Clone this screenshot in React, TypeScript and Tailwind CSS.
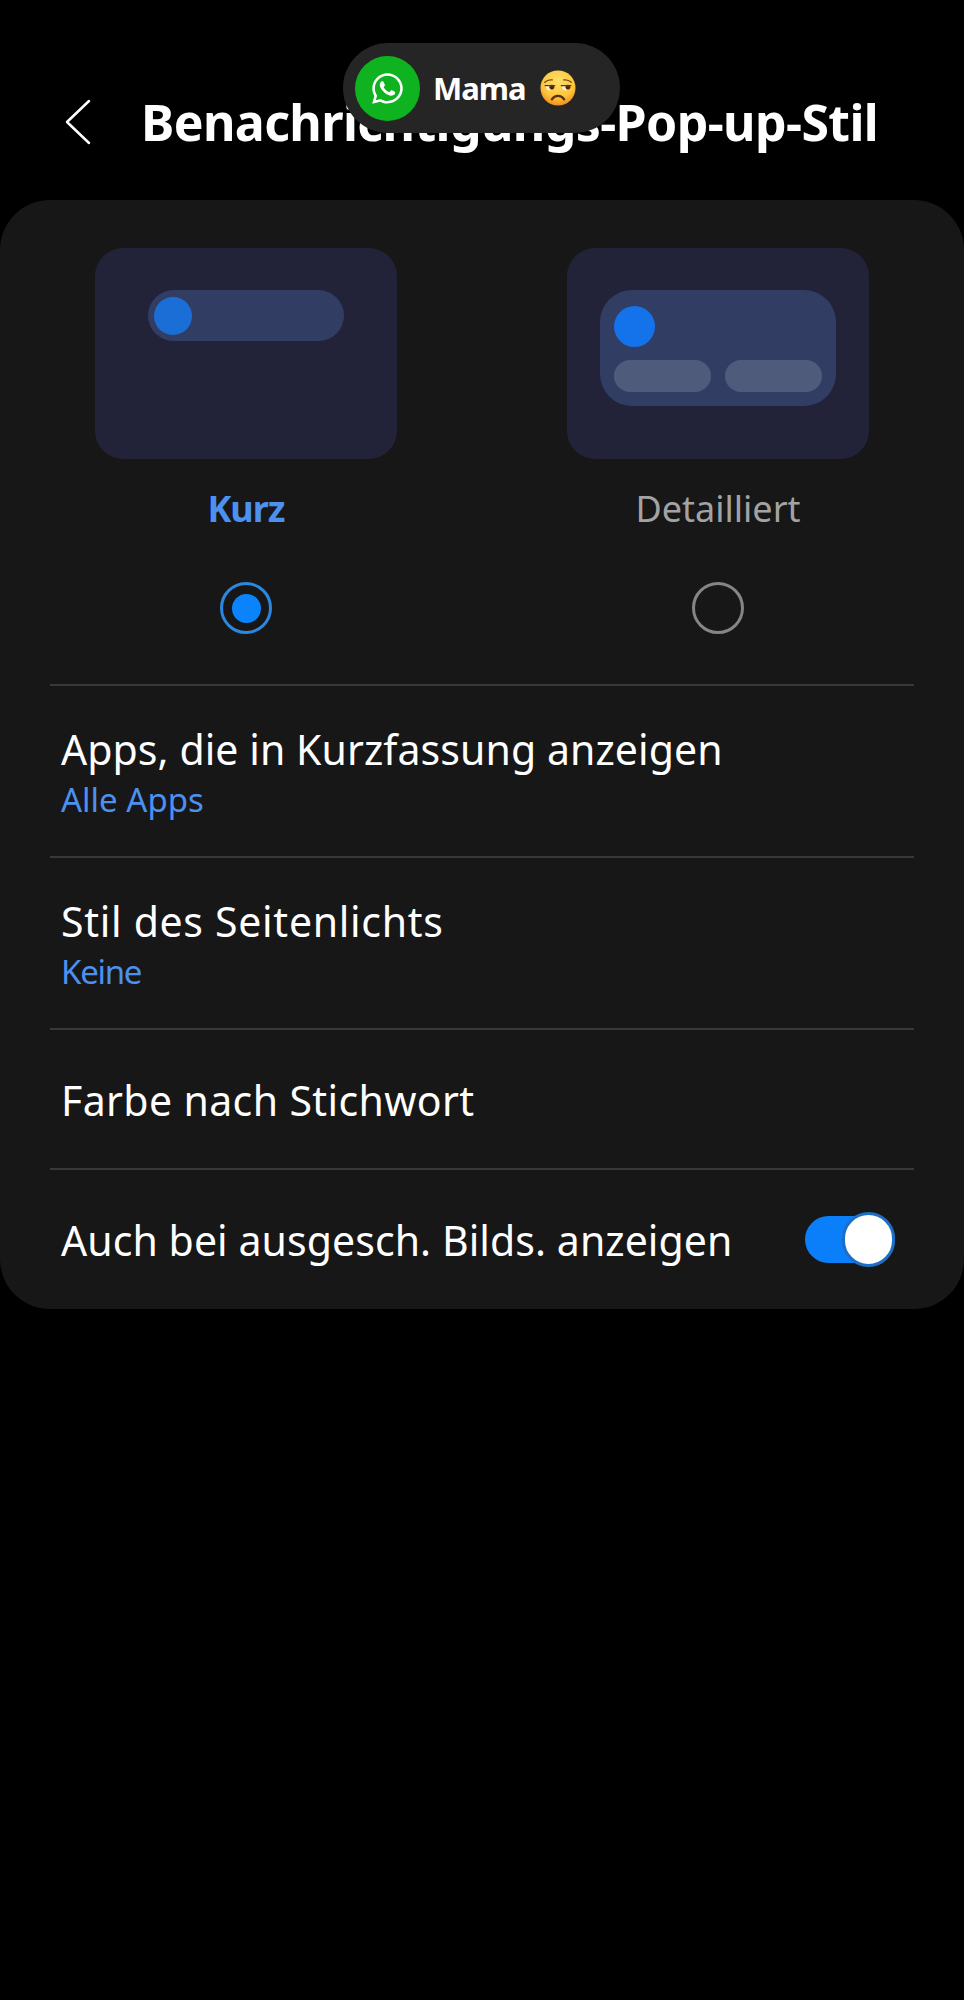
import { FaWhatsapp } from "react-icons/fa";

const FONT = "font-['Noto_Sans',sans-serif]";

function SadFace() {
  return (
    <svg width="36" height="36" viewBox="0 0 38 38">
      <defs>
        <radialGradient id="face" cx="50%" cy="30%" r="72%">
          <stop offset="0%" stopColor="#ffe066" />
          <stop offset="65%" stopColor="#fdc53c" />
          <stop offset="100%" stopColor="#f08a1c" />
        </radialGradient>
      </defs>
      <circle cx="19" cy="19" r="18.500" fill="url(#face)" />
      <path d="M5 13c2-2 5-3 8-2.500M25 10.500c3-.5 6 .5 8 2.500" stroke="#7a4a14" strokeWidth="1.400" fill="none" strokeLinecap="round" />
      <path d="M6 16.500h9c0 3-2 5-4.500 5S6 19.500 6 16.500zM23 16.500h9c0 3-2 5-4.500 5S23 19.500 23 16.500z" fill="#fff3d6" />
      <circle cx="12.500" cy="18.200" r="2.600" fill="#4a2c10" />
      <circle cx="29.500" cy="18.200" r="2.600" fill="#4a2c10" />
      <path d="M5.500 16.500h10M22.500 16.500h10" stroke="#5a3414" strokeWidth="1.500" strokeLinecap="round" />
      <path d="M12.500 31c3.200-5 9.800-5 13 0" stroke="#5a3010" strokeWidth="2.400" fill="none" strokeLinecap="round" />
    </svg>
  );
}

function Row({ title, sub, tall, track, subTrack }: { title: string; sub?: string; tall?: boolean; track: string; subTrack?: string }) {
  return (
    <div className={`pl-[61px] flex flex-col justify-center ${tall ? "h-[170px] pt-[4px]" : "h-[138px] pt-[2px]"}`}>
      <div className={`text-[41px] leading-[50px] text-white ${track}`}>{title}</div>
      {sub && <div className={`mt-[4px] text-[33px] leading-[44px] text-[#4c90f0] ${subTrack}`}>{sub}</div>}
    </div>
  );
}

function Divider() {
  return <div className="mx-[50px] h-[2px] bg-[#383838]" />;
}

export default function App() {
  return (
    <div className={`relative min-h-[2000px] bg-black ${FONT}`}>
      {/* floating notification pill */}
      <div className="absolute left-[343px] top-[43px] z-10 flex h-[90px] w-[277px] items-center rounded-[45px] bg-[#252525] pl-[12px]">
        <div className="flex h-[65px] w-[65px] items-center justify-center rounded-full bg-[#0fb31f] text-white">
          <FaWhatsapp size={35} />
        </div>
        <span className="ml-[13px] text-[31px] font-bold leading-none text-white tracking-[-1px]">Mama</span>
        <span className="ml-[14px] flex"><SadFace /></span>
      </div>

      <div className="flex h-[200px] items-center pt-[43px]">
        <svg className="ml-[63px]" width="30" height="48" viewBox="0 0 30 48" fill="none">
          <path d="M26 3 4 24l22 21" stroke="#fff" strokeWidth="2.500" strokeLinecap="round" strokeLinejoin="round" />
        </svg>
        <h1 className="ml-[48px] text-[50px] font-bold leading-none text-white tracking-[-0.6px] whitespace-nowrap">
          Benachrichtigungs-Pop-up-Stil
        </h1>
      </div>

      <div className="h-[1109px] rounded-[50px] bg-[#171717]">
        <div className="flex justify-between px-[95px] pt-[48px] pb-[50px]">
          <div className="flex w-[302px] flex-col items-center">
            <div className="h-[211px] w-full rounded-[28px] bg-[#222238] pt-[42px] pl-[53px]">
              <div className="flex h-[51px] w-[196px] items-center rounded-full bg-[#323d63] pl-[6px]">
                <div className="h-[38px] w-[38px] rounded-full bg-[#1b6ed6]" />
              </div>
            </div>
            <div className="mt-[25px] h-[50px] text-[36px] font-bold leading-[50px] text-[#4c90f0] tracking-[-1px]">Kurz</div>
            <div className="mt-[48px] flex h-[52px] w-[52px] items-center justify-center rounded-full border-[3px] border-[#2b88e0]">
              <div className="h-[29px] w-[29px] rounded-full bg-[#0b84fb]" />
            </div>
          </div>
          <div className="flex w-[302px] flex-col items-center">
            <div className="h-[211px] w-full rounded-[28px] bg-[#222238] pt-[42px] pl-[33px]">
              <div className="h-[116px] w-[236px] rounded-[32px] bg-[#323d63] pl-[14px] pt-[16px]">
                <div className="h-[41px] w-[41px] rounded-full bg-[#1472ea]" />
                <div className="mt-[13px] flex gap-[14px]">
                  <div className="h-[32px] w-[97px] rounded-full bg-[#4f5b7b]" />
                  <div className="h-[32px] w-[97px] rounded-full bg-[#4f5b7b]" />
                </div>
              </div>
            </div>
            <div className="mt-[25px] h-[50px] text-[36px] leading-[50px] text-[#a3a3a3]">Detailliert</div>
            <div className="mt-[48px] h-[52px] w-[52px] rounded-full border-[3px] border-[#858585]" />
          </div>
        </div>
        <Divider />
        <Row tall title="Apps, die in Kurzfassung anzeigen" sub="Alle Apps" track="tracking-[0.08px]" subTrack="tracking-[0px]" />
        <Divider />
        <Row tall title="Stil des Seitenlichts" sub="Keine" track="tracking-[0.7px]" subTrack="tracking-[-1.3px]" />
        <Divider />
        <Row title="Farbe nach Stichwort" track="tracking-[0.38px]" />
        <Divider />
        <div className="flex h-[138px] items-center justify-between pl-[61px] pr-[69px]">
          <div className="pt-[2px] text-[41px] leading-[50px] text-white tracking-[0.08px]">Auch bei ausgesch. Bilds. anzeigen</div>
          <div className="relative h-[47px] w-[90px] rounded-full bg-[#0b7ffa]">
            <div className="absolute -top-[4px] right-0 h-[55px] w-[53px] rounded-full border-[3px] border-[#1d6fc4] bg-white" />
          </div>
        </div>
      </div>
    </div>
  );
}
